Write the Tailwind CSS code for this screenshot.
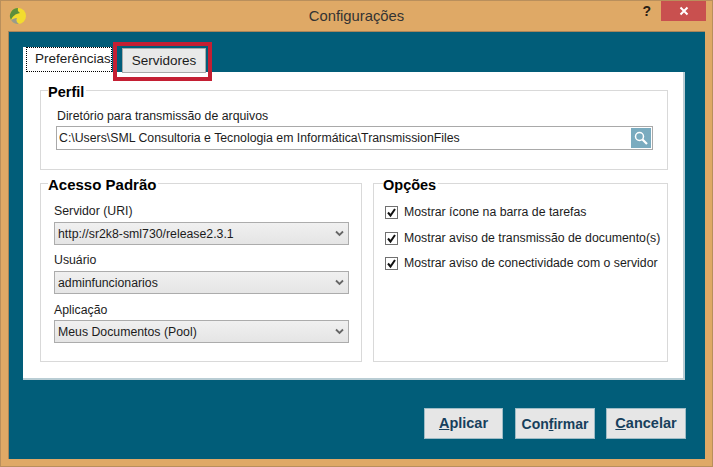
<!doctype html>
<html lang="pt">
<head>
<meta charset="utf-8">
<script src="https://cdn.jsdelivr.net/npm/@tailwindcss/browser@4"></script>
</head>
<body class="m-0">
<div class="w-[713px] h-[467px] flex flex-col bg-[#dfa966] border border-[#b98f5c] font-['Liberation_Sans',Arial,sans-serif] text-[12.3px] text-[#1c1c1c] overflow-hidden">
  <div class="h-[30px] shrink-0 flex items-start relative">
    <svg class="ml-[8px] mt-[6px]" width="18" height="18" viewBox="0 0 18 18">
      <circle cx="9" cy="9" r="8" fill="#f3dc2e"/>
      <path d="M9 1A8 8 0 0 0 2 13C4 9 6 7 11 6 8 4 9 3 9 1Z" fill="#5d8f3c"/>
      <path d="M2 13A8 8 0 0 0 10 17C7 15 7 13 8 11 5 11 4 12 2 13Z" fill="#9a9a8c"/>
    </svg>
    <div class="absolute left-0 right-0 top-[6px] text-center text-[14.8px] leading-[18px] text-[#333]">Configurações</div>
    <div class="ml-auto flex items-start">
      <span class="text-[14px] leading-[18px] font-bold mt-[1px] mr-[10px] text-[#2a2015]">?</span>
      <div class="w-[45px] h-[20px] bg-[#c9504f] flex items-center justify-center mr-[6px]">
        <svg width="10" height="10" viewBox="0 0 10 10"><path d="M1.5 1.5L8.5 8.5M8.5 1.5L1.5 8.5" stroke="#fff" stroke-width="2"/></svg>
      </div>
    </div>
  </div>

  <div class="mx-[7px] h-[428px] bg-[#015d79] pt-[15px] pl-[14px] border-t border-l border-[#a8855a]">
    <div class="flex items-end h-[25px] relative w-[662px]">
      <div class="w-[89px] h-[25px] bg-white pl-[3px]">
        <div class="w-[86px] h-[25px] border border-dotted border-black flex items-center pl-[8px] text-[13.5px] pb-[1px]">Preferências</div>
      </div>
      <div class="ml-[10px] mb-[-1px] w-[84px] h-[25px] bg-[#e9e9e9] border border-[#a9a9a9] flex items-center justify-center pt-[1px] text-[13.5px] relative z-10">Servidores</div>
      <div class="absolute left-[90px] top-[-5px] w-[99px] h-[39px] border-[4px] border-[#c41f33] z-20"></div>
    </div>

    <div class="w-[662px] h-[308px] bg-white border-r-2 border-b-2 border-[#b9cdd4] pt-[18px] pl-[17px]">
      <div class="w-[628px] h-[80px] border border-[#d9d9d9] relative pl-[15px] pr-[14px] pt-[18px]">
        <div class="absolute left-[7px] top-[-7px] bg-white text-[14.5px] leading-[16px] font-bold text-black pr-[2px]">Perfil</div>
        <div class="leading-[14px] ml-[1px]">Diretório para transmissão de arquivos</div>
        <div class="mt-[3px] w-[597px] h-[24px] border border-[#a9a9a9] flex items-center pl-[2px]">
          <span class="flex-1">C:\Users\SML Consultoria e Tecnologia em Informática\TransmissionFiles</span>
          <div class="w-[20px] h-[20px] mr-[1px] bg-[#7aabbf] flex items-center justify-center">
            <svg width="16" height="16" viewBox="0 0 16 16" fill="none"><circle cx="6.5" cy="6.5" r="4" stroke="#fff" stroke-width="1.5"/><path d="M9.5 9.5L14 14" stroke="#fff" stroke-width="2.2"/></svg>
          </div>
        </div>
      </div>

      <div class="flex gap-[11px] mt-[13px]">
        <div class="w-[322px] h-[179px] border border-[#d9d9d9] relative pl-[13px] pt-[20px]">
          <div class="absolute left-[7px] top-[-7px] bg-white text-[15px] leading-[16px] font-bold text-black pr-[2px]">Acesso Padrão</div>
          <div class="leading-[14px] mb-[4px]">Servidor (URI)</div>
          <div class="w-[295px] h-[23px] border border-[#acacac] bg-gradient-to-b from-[#f0f0f0] to-[#e5e5e5] flex items-center pl-[3px] pr-[4px]">
            <span class="flex-1 pt-[1px]">http://sr2k8-sml730/release2.3.1</span>
            <svg width="9" height="7" viewBox="0 0 9 7"><path d="M1 1.5L4.5 5L8 1.5" fill="none" stroke="#666" stroke-width="1.8"/></svg>
          </div>
          <div class="leading-[14px] mt-[8px] mb-[4px]">Usuário</div>
          <div class="w-[295px] h-[23px] border border-[#acacac] bg-gradient-to-b from-[#f0f0f0] to-[#e5e5e5] flex items-center pl-[3px] pr-[4px]">
            <span class="flex-1 pt-[1px]">adminfuncionarios</span>
            <svg width="9" height="7" viewBox="0 0 9 7"><path d="M1 1.5L4.5 5L8 1.5" fill="none" stroke="#666" stroke-width="1.8"/></svg>
          </div>
          <div class="leading-[14px] mt-[9px] mb-[3px]">Aplicação</div>
          <div class="w-[295px] h-[23px] border border-[#acacac] bg-gradient-to-b from-[#f0f0f0] to-[#e5e5e5] flex items-center pl-[3px] pr-[4px]">
            <span class="flex-1 pt-[1px]">Meus Documentos (Pool)</span>
            <svg width="9" height="7" viewBox="0 0 9 7"><path d="M1 1.5L4.5 5L8 1.5" fill="none" stroke="#666" stroke-width="1.8"/></svg>
          </div>
        </div>

        <div class="w-[295px] h-[179px] border border-[#d9d9d9] relative pl-[11px] pt-[22px] flex flex-col">
          <div class="absolute left-[9px] top-[-7px] bg-white text-[14.5px] leading-[16px] font-bold text-black pr-[2px]">Opções</div>
          <div class="flex items-center h-[13px] gap-[6px]">
            <span class="w-[13px] h-[13px] border border-[#707070] flex items-center justify-center"><svg width="11" height="11" viewBox="0 0 11 11"><path d="M2 5.5L4.5 8.5L9 2" fill="none" stroke="#111" stroke-width="2"/></svg></span>
            <span>Mostrar ícone na barra de tarefas</span>
          </div>
          <div class="flex items-center h-[13px] gap-[6px] mt-[13px]">
            <span class="w-[13px] h-[13px] border border-[#707070] flex items-center justify-center"><svg width="11" height="11" viewBox="0 0 11 11"><path d="M2 5.5L4.5 8.5L9 2" fill="none" stroke="#111" stroke-width="2"/></svg></span>
            <span>Mostrar aviso de transmissão de documento(s)</span>
          </div>
          <div class="flex items-center h-[13px] gap-[6px] mt-[12px]">
            <span class="w-[13px] h-[13px] border border-[#707070] flex items-center justify-center"><svg width="11" height="11" viewBox="0 0 11 11"><path d="M2 5.5L4.5 8.5L9 2" fill="none" stroke="#111" stroke-width="2"/></svg></span>
            <span>Mostrar aviso de conectividade com o servidor</span>
          </div>
        </div>
      </div>
    </div>

    <div class="flex w-[663px] justify-end mt-[28px] text-[14.5px] font-bold text-[#173f5c]">
      <div class="w-[79px] h-[31px] bg-[#e6e6e6] border border-[#9fbcc6] flex items-center justify-center pt-[1px]"><span><u>A</u>plicar</span></div>
      <div class="ml-[12px] w-[80px] h-[31px] bg-[#e6e6e6] border border-[#9fbcc6] flex items-center justify-center pt-[1px] text-[14px]"><span>Con<u>f</u>irmar</span></div>
      <div class="ml-[11px] w-[80px] h-[31px] bg-[#e6e6e6] border border-[#9fbcc6] flex items-center justify-center pt-[1px]"><span><u>C</u>ancelar</span></div>
    </div>
  </div>
</div>
</body>
</html>
